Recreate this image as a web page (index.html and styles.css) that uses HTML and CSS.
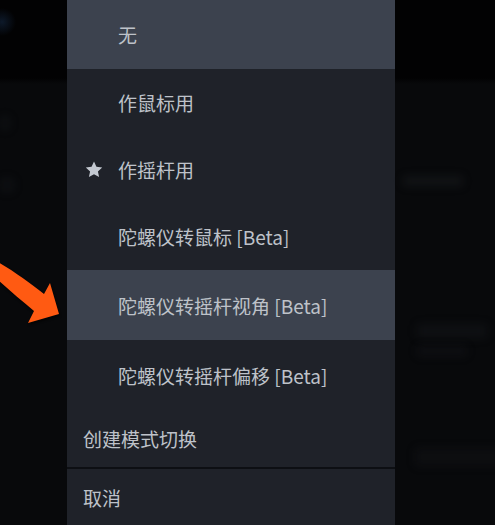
FILE: index.html
```html
<!DOCTYPE html>
<html lang="zh-CN">
<head>
<meta charset="utf-8">
<title>菜单</title>
<link rel="stylesheet" href="styles.css">
</head>
<body>
<div class="screen">
  <aside class="side side-left">
    <div class="ghost ghost-l1"></div>
    <div class="ghost ghost-l2"></div>
    <svg class="arrow" width="70" height="80" viewBox="0 250 70 80" aria-hidden="true">
      <path d="M-2,262 C14,271 30,283 44,294 L50,283 L59,314 L28,323 L34,311 C22,301 10,291 -2,280 Z" fill="#ff5a12"/>
    </svg>
  </aside>
  <ul class="menu">
    <li class="item item-top is-hl"><span class="slot"></span><span class="label">无</span></li>
    <li class="item item-a"><span class="slot"></span><span class="label">作鼠标用</span></li>
    <li class="item item-a"><span class="slot"><svg class="star" width="18" height="17" viewBox="0 0 24 23"><path d="M12 0.8l3.3 7.1 7.8 0.9-5.8 5.3 1.6 7.7L12 17.9l-6.9 3.9 1.6-7.7L0.9 8.8l7.8-0.9z" fill="#c4c9d1"/></svg></span><span class="label">作摇杆用</span></li>
    <li class="item item-a"><span class="slot"></span><span class="label">陀螺仪转鼠标 [Beta]</span></li>
    <li class="item item-b is-hl"><span class="slot"></span><span class="label">陀螺仪转摇杆视角 [Beta]</span></li>
    <li class="item item-b"><span class="slot"></span><span class="label">陀螺仪转摇杆偏移 [Beta]</span></li>
    <li class="item item-c"><span class="label">创建模式切换</span></li>
    <li class="item item-d"><span class="label">取消</span></li>
  </ul>
  <aside class="side side-right">
    <div class="ghost ghost-r1"></div>
    <div class="ghost ghost-r2"></div>
    <div class="ghost ghost-r3"></div>
    <div class="ghost ghost-r4"></div>
  </aside>
</div>
</body>
</html>
```

FILE: styles.css
```css
html, body {
  margin: 0;
  padding: 0;
  height: 525px;
  overflow: hidden;
  background: #060709;
}

.screen {
  display: grid;
  grid-template-columns: 67px 328px 1fr;
  height: 525px;
  font-family: "Noto Sans CJK SC", "Noto Sans", sans-serif;
}

.side {
  position: relative;
  display: flex;
  flex-direction: column;
  background: linear-gradient(#020203 0, #020203 78px, #08090b 84px, #08090b 100%);
}

.side-left {
  background:
    radial-gradient(circle at 2px 22px, rgba(30, 60, 100, 0.4) 0, rgba(30, 60, 100, 0) 14px),
    linear-gradient(#020203 0, #020203 78px, #08090b 84px, #08090b 100%);
}

.ghost {
  background: rgba(40, 42, 48, 0.18);
  filter: blur(4px);
  border-radius: 3px;
}

.ghost-l1 {
  width: 10px;
  height: 14px;
  margin-top: 116px;
}

.ghost-l2 {
  width: 14px;
  height: 14px;
  margin-top: 48px;
}

.ghost-r1 {
  width: 60px;
  height: 10px;
  margin: 176px 0 0 8px;
  background: rgba(40, 42, 48, 0.3);
}

.ghost-r2 {
  width: 70px;
  height: 14px;
  margin: 138px 0 0 22px;
  background: rgba(30, 32, 38, 0.3);
}

.ghost-r3 {
  width: 50px;
  height: 10px;
  margin: 8px 0 0 22px;
  background: rgba(30, 32, 38, 0.25);
}

.ghost-r4 {
  width: 85px;
  height: 18px;
  margin: 92px 0 0 20px;
  background: rgba(30, 32, 38, 0.22);
}

.arrow {
  position: absolute;
  left: 0;
  top: 250px;
  filter: drop-shadow(1px 2px 1px rgba(0, 0, 0, 0.6));
}

.menu {
  list-style: none;
  margin: 0;
  padding: 0;
  background: #1f2229;
  display: flex;
  flex-direction: column;
}

.item {
  display: flex;
  align-items: center;
  padding-left: 16px;
  color: #bec2c9;
  font-size: 19px;
  line-height: 1;
  flex: none;
}

.is-hl {
  background: #3c424e;
}

.slot {
  width: 35px;
  flex: none;
  display: flex;
  align-items: center;
}

.star {
  display: block;
  margin-left: 2px;
}

.item-top { height: 69px; }
.item-a { height: 67px; }
.item-b { height: 70px; }
.item-c { height: 57px; border-bottom: 2px solid #0d0f13; }
.item-d { height: 56px; }

.label {
  white-space: nowrap;
}
```
